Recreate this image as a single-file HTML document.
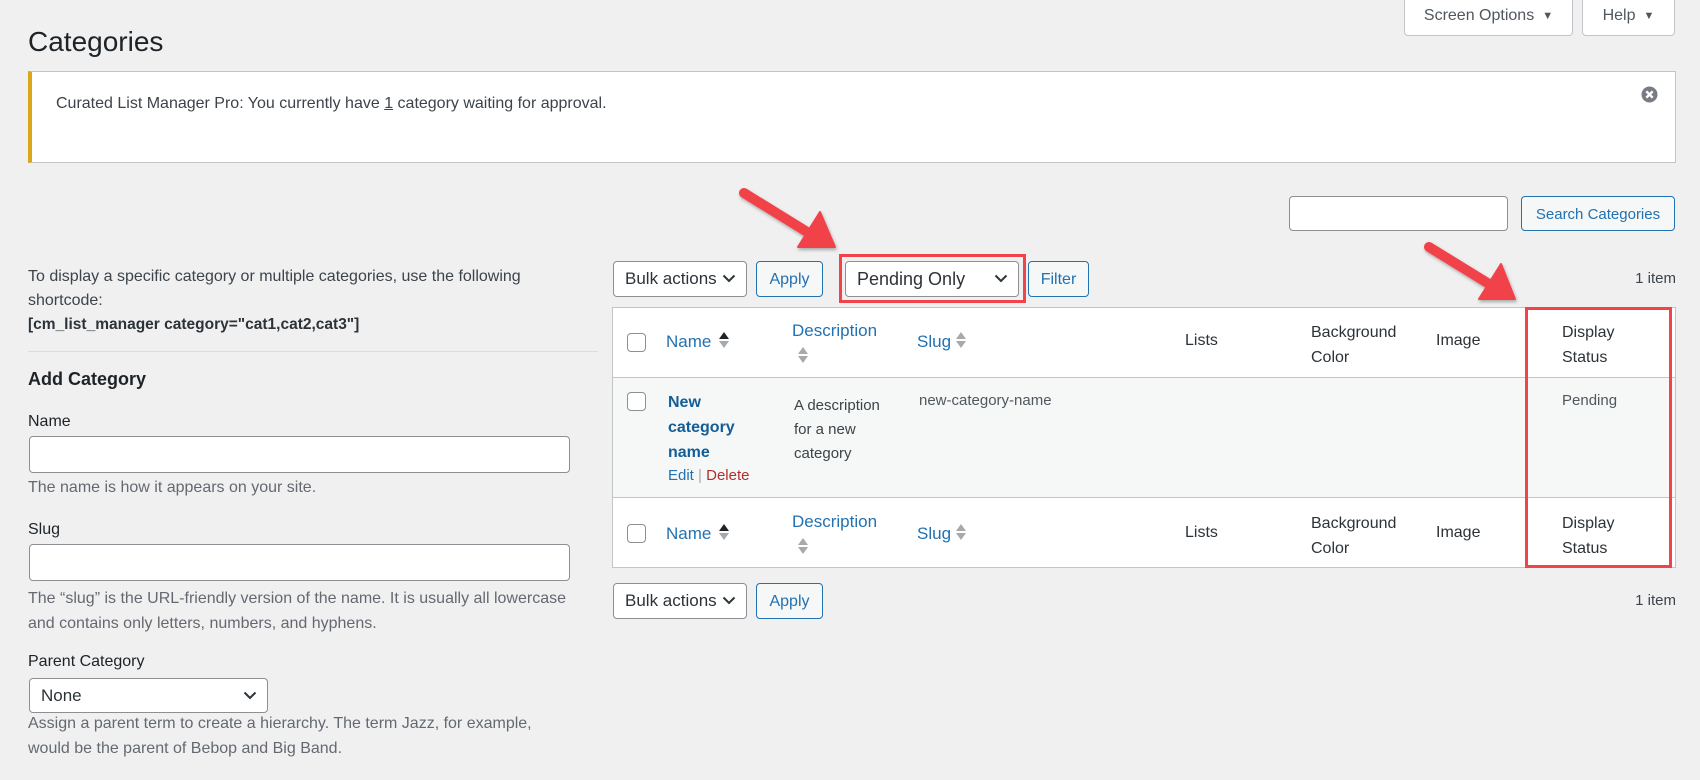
<!DOCTYPE html>
<html><head><meta charset="utf-8"><style>
*{box-sizing:border-box;margin:0;padding:0}
body{width:1700px;height:780px;background:#f0f0f1;font-family:"Liberation Sans",sans-serif;color:#3c434a;position:relative;overflow:hidden;font-size:15px}
.a{position:absolute;white-space:nowrap}
.btn{position:absolute;border:1px solid #2271b1;color:#2271b1;background:#f6f7f7;border-radius:4px;font-size:16px;display:flex;align-items:center;justify-content:center;padding-top:2px}
.sel{position:absolute;border:1px solid #8c8f94;background:#fff;border-radius:4px;font-size:17px;color:#2c3338;display:flex;align-items:center;padding-left:11px}
.sel svg{position:absolute;right:10px;top:50%;margin-top:-5px}
.inp{position:absolute;border:1px solid #8c8f94;background:#fff;border-radius:4px}
.cb{position:absolute;width:19px;height:19px;border:1px solid #8c8f94;border-radius:4px;background:#fff}
.th{font-size:16px;color:#2c3338}
.lk{color:#2271b1}
.sort{position:absolute;width:0;height:0;border-left:5px solid transparent;border-right:5px solid transparent}
</style></head><body>
<div class="a" style="left:1404px;top:-5px;width:169px;height:41px;background:#fff;border:1px solid #c3c4c7;border-radius:0 0 4px 4px;display:flex;align-items:center;justify-content:center;font-size:16px;color:#50575e">Screen Options <span style="font-size:11px;margin-left:8px">▼</span></div>
<div class="a" style="left:1582px;top:-5px;width:93px;height:41px;background:#fff;border:1px solid #c3c4c7;border-radius:0 0 4px 4px;display:flex;align-items:center;justify-content:center;font-size:16px;color:#50575e">Help <span style="font-size:11px;margin-left:8px">▼</span></div>
<div class="a" style="left:28px;top:26px;font-size:28px;color:#1d2327">Categories</div>
<div class="a" style="left:28px;top:71px;width:1648px;height:92px;background:#fff;border:1px solid #c3c4c7;border-left:4px solid #dba617"></div>
<div class="a" style="left:56px;top:95px;font-size:16px;color:#3c434a">Curated List Manager Pro: You currently have <u>1</u> category waiting for approval.</div>
<svg class="a" style="left:1641px;top:86px" width="17" height="17" viewBox="0 0 17 17"><circle cx="8.5" cy="8.5" r="8" fill="#787c82"/><path d="M5.3 5.3l6.4 6.4M11.7 5.3l-6.4 6.4" stroke="#fff" stroke-width="2.4"/></svg>

<div class="inp" style="left:1289px;top:196px;width:219px;height:35px"></div>
<div class="btn" style="left:1521px;top:196px;width:154px;height:35px;font-size:15px">Search Categories</div>

<div class="a" style="left:28px;top:265px;line-height:24px;font-size:16px;color:#3c434a">To display a specific category or multiple categories, use the following<br>shortcode:<br><b style="color:#2c3338;font-size:15.5px">[cm_list_manager category="cat1,cat2,cat3"]</b></div>
<div class="a" style="left:28px;top:351px;width:570px;height:1px;background:#dcdcde"></div>
<div class="a" style="left:28px;top:369px;font-size:18px;font-weight:bold;color:#1d2327">Add Category</div>
<div class="a" style="left:28px;top:413px;font-size:16px;color:#1d2327">Name</div>
<div class="inp" style="left:29px;top:436px;width:541px;height:37px"></div>
<div class="a" style="left:28px;top:479px;font-size:16px;color:#646970">The name is how it appears on your site.</div>
<div class="a" style="left:28px;top:521px;font-size:16px;color:#1d2327">Slug</div>
<div class="inp" style="left:29px;top:544px;width:541px;height:37px"></div>
<div class="a" style="left:28px;top:586px;font-size:16px;color:#646970;line-height:25px">The “slug” is the URL-friendly version of the name. It is usually all lowercase<br>and contains only letters, numbers, and hyphens.</div>
<div class="a" style="left:28px;top:653px;font-size:16px;color:#1d2327">Parent Category</div>
<div class="sel" style="left:29px;top:678px;width:239px;height:35px;font-size:17px">None<svg width="14" height="9" viewBox="0 0 14 9"><path d="M1.5 1.5l5.5 5.5 5.5-5.5" fill="none" stroke="#2c3338" stroke-width="2"/></svg></div>
<div class="a" style="left:28px;top:711px;font-size:16px;color:#646970;line-height:25px">Assign a parent term to create a hierarchy. The term Jazz, for example,<br>would be the parent of Bebop and Big Band.</div>

<div class="sel" style="left:613px;top:261px;width:134px;height:36px">Bulk actions<svg width="14" height="9" viewBox="0 0 14 9"><path d="M1.5 1.5l5.5 5.5 5.5-5.5" fill="none" stroke="#2c3338" stroke-width="2"/></svg></div>
<div class="btn" style="left:756px;top:261px;width:67px;height:36px">Apply</div>
<div class="a" style="left:839px;top:254px;width:187px;height:49px;border:3px solid #f2424a"></div>
<div class="sel" style="left:845px;top:261px;width:174px;height:36px;font-size:18px">Pending Only<svg width="14" height="9" viewBox="0 0 14 9"><path d="M1.5 1.5l5.5 5.5 5.5-5.5" fill="none" stroke="#2c3338" stroke-width="2"/></svg></div>
<div class="btn" style="left:1028px;top:261px;width:61px;height:36px">Filter</div>
<div class="a" style="right:24px;top:270px;font-size:15px;color:#3c434a">1 item</div>

<div class="a" style="left:612px;top:307px;width:1064px;height:261px;background:#fff;border:1px solid #c3c4c7"></div>
<div class="a" style="left:613px;top:377px;width:1062px;height:121px;background:#f6f7f7;border-top:1px solid #c3c4c7;border-bottom:1px solid #c3c4c7"></div>

<div class="cb" style="left:627px;top:333px"></div>
<div class="a th lk" style="left:666px;top:332px;font-size:17px">Name</div>
<div class="sort" style="left:719px;top:332px;border-bottom:7px solid #1d2327"></div>
<div class="sort" style="left:719px;top:341px;border-top:7px solid #a7aaad"></div>
<div class="a th lk" style="left:792px;top:321px;font-size:17px">Description</div>
<div class="sort" style="left:798px;top:347px;border-bottom:7px solid #a7aaad"></div>
<div class="sort" style="left:798px;top:356px;border-top:7px solid #a7aaad"></div>
<div class="a th lk" style="left:917px;top:332px;font-size:17px">Slug</div>
<div class="sort" style="left:956px;top:332px;border-bottom:7px solid #a7aaad"></div>
<div class="sort" style="left:956px;top:341px;border-top:7px solid #a7aaad"></div>
<div class="a th" style="left:1185px;top:332px">Lists</div>
<div class="a th" style="left:1311px;top:320px;line-height:25px">Background<br>Color</div>
<div class="a th" style="left:1436px;top:332px">Image</div>
<div class="a th" style="left:1562px;top:320px;line-height:25px">Display<br>Status</div>

<div class="cb" style="left:627px;top:392px"></div>
<div class="a" style="left:668px;top:390px;font-size:16px;font-weight:bold;line-height:25px;color:#135e96">New<br>category<br>name</div>
<div class="a" style="left:668px;top:467px;font-size:15px"><span class="lk">Edit</span> <span style="color:#a7aaad">|</span> <span style="color:#b32d2e">Delete</span></div>
<div class="a" style="left:794px;top:394px;font-size:15px;line-height:24px;color:#3c434a">A description<br>for a new<br>category</div>
<div class="a" style="left:919px;top:392px;font-size:15px;color:#50575e">new-category-name</div>
<div class="a" style="left:1562px;top:392px;font-size:15px;color:#50575e">Pending</div>

<div class="cb" style="left:627px;top:524px"></div>
<div class="a th lk" style="left:666px;top:524px;font-size:17px">Name</div>
<div class="sort" style="left:719px;top:524px;border-bottom:7px solid #1d2327"></div>
<div class="sort" style="left:719px;top:533px;border-top:7px solid #a7aaad"></div>
<div class="a th lk" style="left:792px;top:512px;font-size:17px">Description</div>
<div class="sort" style="left:798px;top:538px;border-bottom:7px solid #a7aaad"></div>
<div class="sort" style="left:798px;top:547px;border-top:7px solid #a7aaad"></div>
<div class="a th lk" style="left:917px;top:524px;font-size:17px">Slug</div>
<div class="sort" style="left:956px;top:524px;border-bottom:7px solid #a7aaad"></div>
<div class="sort" style="left:956px;top:533px;border-top:7px solid #a7aaad"></div>
<div class="a th" style="left:1185px;top:524px">Lists</div>
<div class="a th" style="left:1311px;top:511px;line-height:25px">Background<br>Color</div>
<div class="a th" style="left:1436px;top:524px">Image</div>
<div class="a th" style="left:1562px;top:511px;line-height:25px">Display<br>Status</div>

<div class="a" style="left:1525px;top:307px;width:147px;height:261px;border:3px solid #f2424a"></div>

<div class="sel" style="left:613px;top:583px;width:134px;height:36px">Bulk actions<svg width="14" height="9" viewBox="0 0 14 9"><path d="M1.5 1.5l5.5 5.5 5.5-5.5" fill="none" stroke="#2c3338" stroke-width="2"/></svg></div>
<div class="btn" style="left:756px;top:583px;width:67px;height:36px">Apply</div>
<div class="a" style="right:24px;top:592px;font-size:15px;color:#3c434a">1 item</div>

<svg class="a" style="left:0;top:0" width="1700" height="780">
<defs><filter id="s"><feDropShadow dx="1" dy="2" stdDeviation="1.5" flood-opacity="0.3"/></filter></defs>
<g filter="url(#s)" fill="#f2424a" stroke="#f2424a">
<path d="M744 193L812 235" stroke-width="10" stroke-linecap="round"/>
<path d="M835 247L798 247L820 212Z" stroke-width="2" stroke-linejoin="round"/>
<path d="M1429 247L1494 287" stroke-width="10" stroke-linecap="round"/>
<path d="M1515 299L1479 299L1501 264Z" stroke-width="2" stroke-linejoin="round"/>
</g>
</svg>
</body></html>
